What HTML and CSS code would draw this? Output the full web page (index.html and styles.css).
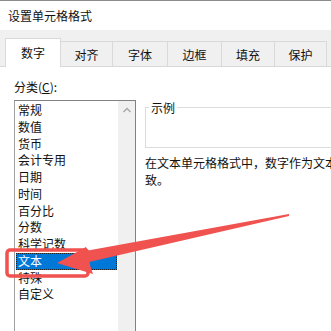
FILE: index.html
```html
<!DOCTYPE html>
<html lang="zh-CN">
<head>
    <meta charset="UTF-8">
    <title>设置单元格格式</title>
    <link rel="stylesheet" href="styles.css">
</head>
<body>
    <div class="dialogo">
        <div class="titulo">设置单元格格式</div>

        <div class="pestanas">
            <div class="pestana activa">数字</div>
            <div class="pestana ancho52">对齐</div>
            <div class="pestana ancho55">字体</div>
            <div class="pestana ancho54">边框</div>
            <div class="pestana ancho53">填充</div>
            <div class="pestana ancho52">保护</div>
        </div>

        <div class="panel">
            <div class="izquierda">
                <p class="etiqueta">分类(<u>C</u>):</p>
                <div class="lista">
                    <ul class="items">
                        <li>常规</li>
                        <li>数值</li>
                        <li>货币</li>
                        <li>会计专用</li>
                        <li>日期</li>
                        <li>时间</li>
                        <li>百分比</li>
                        <li>分数</li>
                        <li>科学记数</li>
                        <li class="seleccionado">文本</li>
                        <li>特殊</li>
                        <li>自定义</li>
                    </ul>
                    <div class="barra">
                        <svg width="16" height="16" viewBox="0 0 16 16">
                            <path d="M4.5 10 L8 6.5 L11.5 10" fill="none" stroke="#a6a6a6" stroke-width="1.3"/>
                        </svg>
                    </div>
                </div>
            </div>

            <div class="derecha">
                <fieldset class="ejemplo">
                    <legend>示例</legend>
                    <div class="vacio"></div>
                </fieldset>
                <p class="descripcion">在文本单元格格式中，数字作为文本处理。</p>
                <p class="descripcion">致。</p>
            </div>
        </div>

        <svg class="anotacion" width="331" height="331" viewBox="0 0 331 331">
            <rect x="7" y="250" width="81" height="26" rx="3" fill="none" stroke="#f0524f" stroke-width="3.5"/>
            <polygon points="57,263 86,247 88,250.5 289,214 289,216 89,262 93,274" fill="#f0524f"/>
        </svg>
    </div>
</body>
</html>
```

FILE: styles.css
```css
body {
    margin: 0;
    font-family: "Noto Sans CJK SC", "Microsoft YaHei", sans-serif;
    font-size: 12px;
    color: #111;
    background-color: #ffffff;
    overflow: hidden;
}

p {
    margin: 0px;
    padding: 0px;
}

.dialogo {
    position: relative;
    width: 331px;
    height: 331px;
    overflow: hidden;
}

.titulo {
    height: 29px;
    border-top: 1px solid #8c8c8c;
    padding-left: 8px;
    display: flex;
    align-items: center;
    line-height: 17px;
}

.pestanas {
    display: flex;
    align-items: flex-end;
    height: 37px;
    padding-left: 5px;
    background-color: #f0f0f0;
    border-bottom: 1px solid #d9d9d9;
    box-sizing: border-box;
}

.pestana {
    flex: none;
    height: 24px;
    border-right: 1px solid #d9d9d9;
    border-top: 1px solid #d9d9d9;
    display: flex;
    align-items: center;
    justify-content: center;
    line-height: 17px;
}

.activa {
    width: 54px;
    height: 27px;
    background-color: #ffffff;
    border-left: 1px solid #d9d9d9;
    margin-bottom: -1px;
    padding-bottom: 1px;
}

.ancho52 { width: 51px; }
.ancho53 { width: 52px; }
.ancho54 { width: 53px; }
.ancho55 { width: 54px; }

.panel {
    display: flex;
    gap: 9px;
    padding-left: 14px;
    background-color: #ffffff;
}

.izquierda {
    flex: none;
    display: flex;
    flex-direction: column;
    width: 122px;
}

.etiqueta {
    line-height: 17px;
    padding-top: 11px;
    margin-bottom: 5px;
    white-space: nowrap;
}

.etiqueta u {
    text-underline-offset: 1px;
}

.lista {
    display: flex;
    height: 240px;
    border: 1px solid #828282;
    border-left-color: #a0a0a0;
}

.items {
    list-style: none;
    margin: 0;
    padding: 1px 1px 0 1px;
    flex: 1;
}

.items li {
    height: 16.75px;
    line-height: 16.75px;
    padding-left: 2px;
    white-space: nowrap;
}

.items .seleccionado {
    background-color: #0078d7;
    color: #ffffff;
    outline: 1px dotted #222;
    outline-offset: -1px;
}

.barra {
    flex: none;
    width: 17px;
    background-color: #f0f0f0;
    display: flex;
    justify-content: center;
    align-items: flex-start;
    padding-top: 1px;
}

.derecha {
    flex: 1;
    min-width: 0;
    padding-top: 32px;
}

.ejemplo {
    margin: 0;
    padding: 0 0 0 3px;
    border: 1px solid #dcdcdc;
    width: 220px;
}

.ejemplo legend {
    padding: 0 2px;
    line-height: 17px;
}

.vacio {
    height: 31px;
}

.descripcion {
    line-height: 16.5px;
    white-space: nowrap;
}

.descripcion:first-of-type {
    margin-top: 7px;
}

.anotacion {
    position: absolute;
    top: 0;
    left: 0;
    pointer-events: none;
}
```
